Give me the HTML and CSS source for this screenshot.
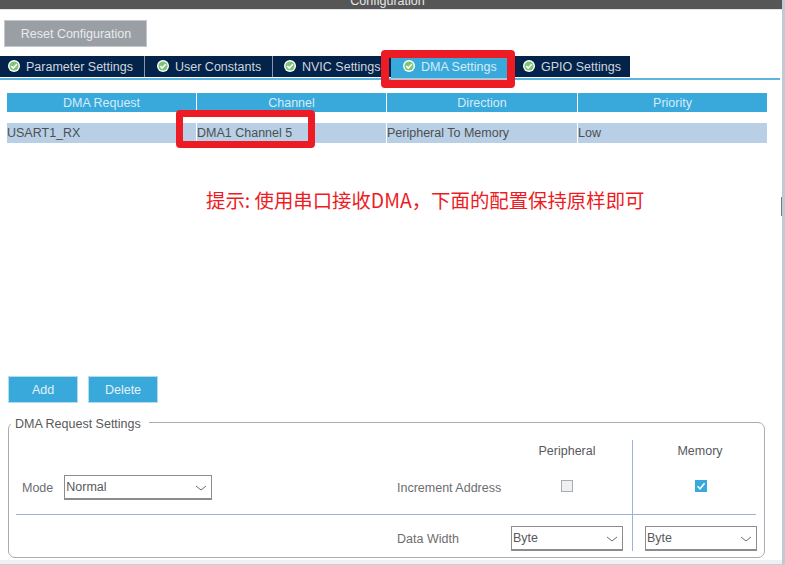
FILE: index.html
```html
<!DOCTYPE html>
<html lang="en">
<head>
  <meta charset="UTF-8" />
  <meta name="viewport" content="width=device-width, initial-scale=1.0"/>
  <title>DMA Settings</title>
  <link rel="stylesheet" href="styles.css">
</head>
<body>
  <svg class="icon-defs" width="0" height="0">
    <symbol id="tick" viewBox="0 0 12 12">
      <circle cx="6" cy="6" r="6" fill="#fff"/>
      <circle cx="6" cy="6" r="4.6" fill="#7cc576"/>
      <path d="M3.2 6l2 2 3.6-3.8" fill="none" stroke="#fff" stroke-width="1.6"/>
    </symbol>
    <symbol id="chevron" viewBox="0 0 12 6">
      <path d="M1 1l5 4 5-4" fill="none" stroke="#6d6e71" stroke-width="1"/>
    </symbol>
  </svg>

  <header class="title-bar"><span>Configuration</span></header>

  <main class="panel">
    <button class="btn btn-reset">Reset Configuration</button>

    <nav class="tabs">
      <div class="tab tab-1"><svg class="tick"><use href="#tick"/></svg>Parameter Settings</div>
      <div class="tab tab-2"><svg class="tick"><use href="#tick"/></svg>User Constants</div>
      <div class="tab tab-3"><svg class="tick"><use href="#tick"/></svg>NVIC Settings</div>
      <div class="tab tab-4 active"><svg class="tick"><use href="#tick"/></svg>DMA Settings</div>
      <div class="tab tab-5"><svg class="tick"><use href="#tick"/></svg>GPIO Settings</div>
    </nav>

    <div class="table">
      <div class="th">DMA Request</div>
      <div class="th">Channel</div>
      <div class="th">Direction</div>
      <div class="th">Priority</div>
      <div class="td">USART1_RX</div>
      <div class="td">DMA1 Channel 5</div>
      <div class="td">Peripheral To Memory</div>
      <div class="td">Low</div>
    </div>

    <p class="hint">提示: 使用串口接收DMA，下面的配置保持原样即可</p>

    <div class="actions">
      <button class="btn btn-blue">Add</button>
      <button class="btn btn-blue">Delete</button>
    </div>

    <section class="settings">
      <h2 class="settings-title">DMA Request Settings</h2>
      <div class="settings-grid">
        <div class="col-head col-periph">Peripheral</div>
        <div class="col-head col-mem">Memory</div>

        <div class="mode-row">
          <span class="label">Mode</span>
          <div class="select select-mode">Normal<svg class="chevron"><use href="#chevron"/></svg></div>
        </div>
        <div class="label cell-label">Increment Address</div>
        <div class="cell-check"><span class="check"></span></div>
        <div class="cell-check col-mem-cell">
          <span class="check checked">
            <svg viewBox="0 0 12 12"><path d="M2.5 6.2l2.5 2.6 4.6-5.6" fill="none" stroke="#fff" stroke-width="1.5"/></svg>
          </span>
        </div>

        <div class="h-line"></div>
        <div class="v-line"></div>

        <div class="label cell-label width-label">Data Width</div>
        <div class="select select-width">Byte<svg class="chevron"><use href="#chevron"/></svg></div>
        <div class="select select-width select-mem">Byte<svg class="chevron"><use href="#chevron"/></svg></div>
      </div>
    </section>

    <div class="mark mark-tab"></div>
    <div class="mark mark-channel"></div>
  </main>

  <div class="bottom-strip"></div>
  <div class="scroll-gutter"><div class="scroll-thumb"></div></div>
</body>
</html>
```
FILE: styles.css
```css
* {
  box-sizing: border-box;
}

body {
  margin: 0;
  width: 785px;
  height: 565px;
  overflow: hidden;
  background: #fff;
  color: #58595b;
  font-family: "Liberation Sans", Arial, sans-serif;
  font-size: 12.5px;
}

.icon-defs {
  position: absolute;
}

.title-bar {
  height: 9px;
  padding-right: 10px;
  background: #555655;
  color: #e8e8e8;
  font-size: 12.5px;
  text-align: center;
  overflow: hidden;
  line-height: 3px;
}

.panel {
  position: relative;
  height: 551px;
  border-top: 1px solid #e3e5e8;
  padding-top: 10px;
}

.btn {
  display: block;
  border: 1px solid #b4dcf0;
  font: inherit;
  padding: 0;
  color: #e3f1f8;
}

.btn-reset {
  width: 143px;
  height: 27px;
  margin-left: 4px;
  padding-left: 1px;
  background: #9a9fa5;
  border-color: #c4c7ca;
  color: #e9eaec;
}

.tabs {
  display: flex;
  height: 24px;
  margin-top: 9px;
  margin-right: 5px;
  border-bottom: 2px solid #5db4de;
}

.tab {
  display: flex;
  align-items: center;
  height: 21px;
  padding-top: 1px;
  background: #03234b;
  color: #cfd6df;
  border-right: 1px solid #8b97a8;
  white-space: nowrap;
}

.tick {
  width: 12px;
  height: 12px;
  margin-right: 6px;
  margin-bottom: 2px;
  flex: none;
}

.tab-1 { width: 145px; padding-left: 8px; }
.tab-2 { width: 128px; padding-left: 12px; }
.tab-3 { width: 118px; padding-left: 11px; border-right: 2px solid #03234b; }
.tab-4 { width: 123px; padding-left: 12px; }
.tab-5 { width: 116px; padding-left: 9px; border-right: 0; }

.tab.active {
  height: 24px;
  padding-bottom: 1px;
  background: #39a9dc;
  color: #d5ecf7;
  border-right: 0;
  border-bottom: 2px solid #b8c4cf;
}

.table {
  display: grid;
  grid-template-columns: 189px 189px 190px 189px;
  grid-template-rows: 19px 20px;
  row-gap: 11px;
  column-gap: 1px;
  margin: 13px 0 0 7px;
  width: 760px;
}

.th {
  background: #39a9dc;
  color: #d5ecf7;
  text-align: center;
  line-height: 20px;
}

.td {
  background: #b8cfe6;
  color: #4d4f52;
  line-height: 20px;
}

.hint {
  margin: 45px 0 0 206px;
  height: 24px;
  font-family: "Noto Sans CJK SC", sans-serif;
  font-size: 19.4px;
  line-height: 24px;
  color: #ed1c24;
  white-space: nowrap;
}

.actions {
  display: flex;
  gap: 10px;
  margin: 164px 0 0 8px;
}

.btn-blue {
  width: 70px;
  height: 27px;
  background: #39a9dc;
}

.settings {
  position: relative;
  width: 757px;
  height: 136px;
  margin: 19px 0 0 8px;
  border: 1px solid #a9acb0;
  border-radius: 7px;
}

.settings-title {
  position: absolute;
  top: -6px;
  left: 2px;
  margin: 0;
  padding: 0 8px 0 4px;
  background: #fff;
  font-size: 12.5px;
  font-weight: normal;
  line-height: 14px;
}

.settings-grid {
  display: grid;
  grid-template-columns: 381px 114px 121px 124px;
  grid-template-rows: 30px 34px 10px 1px 36px;
  margin: 17px 0 0 7px;
  width: 740px;
}

.col-head {
  grid-row: 1;
  text-align: center;
  line-height: 22px;
}

.col-periph {
  grid-column: 2 / 4;
  margin-left: 113px;
  width: 114px;
}

.col-mem {
  grid-column: 4;
  padding-left: 12px;
}

.mode-row {
  grid-column: 1;
  grid-row: 2;
  display: flex;
  align-items: center;
  gap: 11px;
  padding-left: 6px;
}

.label {
  color: #6d6e71;
  margin-top: 2px;
}

.cell-label {
  grid-column: 1 / 3;
  grid-row: 2;
  margin-left: 381px;
  align-self: center;
  white-space: nowrap;
}

.cell-check {
  grid-column: 3;
  grid-row: 2;
  display: flex;
  align-items: center;
  padding-left: 50px;
  padding-bottom: 2px;
}

.col-mem-cell {
  grid-column: 4;
  padding-left: 63px;
}

.check {
  display: block;
  width: 12px;
  height: 12px;
  background: #eef0f2;
  border: 1px solid #a9acb0;
}

.check.checked {
  background: #39a9dc;
  border: 0;
}

.check svg {
  display: block;
}

.h-line {
  grid-column: 1 / -1;
  grid-row: 4;
  background: #9db2d6;
}

.v-line {
  grid-column: 4;
  grid-row: 1 / -1;
  width: 1px;
  background: #9db2d6;
}

.select {
  position: relative;
  height: 25px;
  border: 1px solid #8a8c8e;
  border-bottom-width: 2px;
  color: #58595b;
  line-height: 23px;
  padding-left: 1px;
  background: #fff;
}

.chevron {
  position: absolute;
  top: 9px;
  right: 4px;
  width: 12px;
  height: 6px;
}

.select-mode {
  width: 148px;
}

.width-label {
  grid-row: 5;
  align-self: start;
  margin-top: 17px;
}

.select-width {
  grid-column: 3;
  grid-row: 5;
  width: 112px;
  margin-top: 11px;
}

.select-mem {
  grid-column: 4;
  margin-left: 13px;
}

.mark {
  position: absolute;
  border-style: solid;
  border-color: #ed1c24;
  border-radius: 4px;
}

.mark-tab {
  left: 381px;
  top: 40px;
  width: 134px;
  height: 38px;
  border-width: 8px;
}

.mark-channel {
  left: 176px;
  top: 100px;
  width: 139px;
  height: 38px;
  border-width: 7px;
}

.bottom-strip {
  position: absolute;
  left: 0;
  top: 560px;
  width: 785px;
  height: 5px;
  background: #eef0f2;
  border-bottom: 1px solid #c5d0d8;
}

.scroll-gutter {
  position: absolute;
  left: 782px;
  top: 0;
  width: 3px;
  height: 565px;
  background: #bccbd4;
}

.scroll-thumb {
  position: absolute;
  left: -1px;
  top: 197px;
  width: 1px;
  height: 19px;
  background: #77797c;
}
```
